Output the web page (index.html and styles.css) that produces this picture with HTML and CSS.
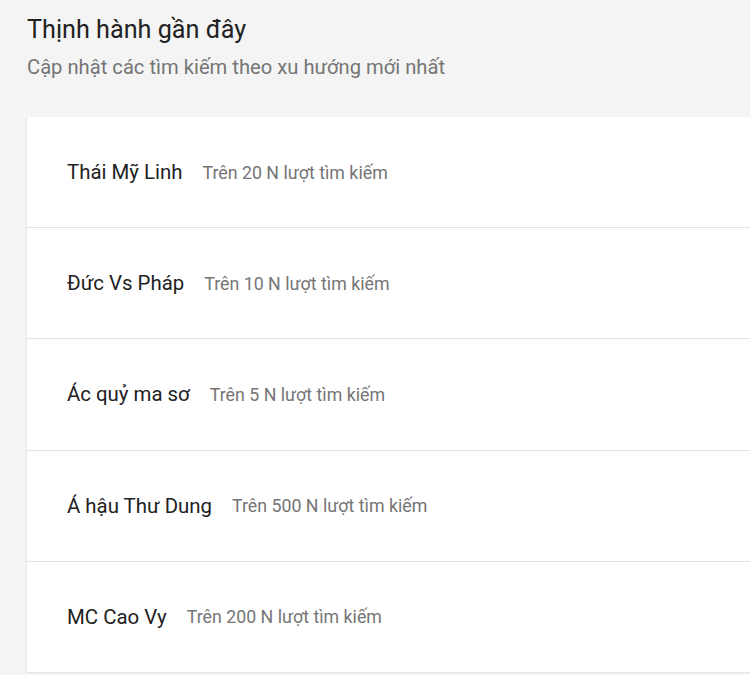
FILE: index.html
```html
<!DOCTYPE html>
<html lang="vi">
<head>
    <meta charset="UTF-8">
    <meta name="viewport" content="width=device-width, initial-scale=1.0">
    <title>Thịnh hành gần đây</title>
    <link rel="stylesheet" href="styles.css">
</head>
<body>
    <div class="header">
        <h1>Thịnh hành gần đây</h1>
        <p>Cập nhật các tìm kiếm theo xu hướng mới nhất</p>
    </div>

    <div class="trend-list">
        <div class="trend-item">
            <span class="trend-name">Thái Mỹ Linh</span>
            <span class="trend-count">Trên 20 N lượt tìm kiếm</span>
        </div>
        <div class="trend-item">
            <span class="trend-name">Đức Vs Pháp</span>
            <span class="trend-count">Trên 10 N lượt tìm kiếm</span>
        </div>
        <div class="trend-item">
            <span class="trend-name">Ác quỷ ma sơ</span>
            <span class="trend-count">Trên 5 N lượt tìm kiếm</span>
        </div>
        <div class="trend-item">
            <span class="trend-name">Á hậu Thư Dung</span>
            <span class="trend-count">Trên 500 N lượt tìm kiếm</span>
        </div>
        <div class="trend-item">
            <span class="trend-name">MC Cao Vy</span>
            <span class="trend-count">Trên 200 N lượt tìm kiếm</span>
        </div>
    </div>
</body>
</html>
```

FILE: styles.css
```css
body {
    font-family: Roboto, "Noto Sans", sans-serif;
    margin: 0;
    padding: 0;
    background-color: #f4f4f4;
    overflow: hidden;
}

.header {
    padding: 14px 0 0 27px;
    height: 117px;
    box-sizing: border-box;
}

.header h1 {
    margin: 0;
    font-size: 25.2px;
    font-weight: normal;
    color: #212121;
    line-height: 32px;
}

.header p {
    margin: 9px 0 0 0;
    font-size: 20.2px;
    color: #757575;
    line-height: 24px;
}

.trend-list {
    margin-left: 26px;
    background-color: #fff;
    border-left: 1px solid #e6e6e6;
}

.trend-item {
    display: flex;
    align-items: center;
    gap: 20px;
    height: 111.2px;
    padding-left: 40px;
    border-bottom: 1px solid #e3e3e3;
    box-sizing: border-box;
}

.trend-name {
    font-size: 20.4px;
    color: #212121;
}

.trend-count {
    font-size: 17.8px;
    color: #757575;
}
```
